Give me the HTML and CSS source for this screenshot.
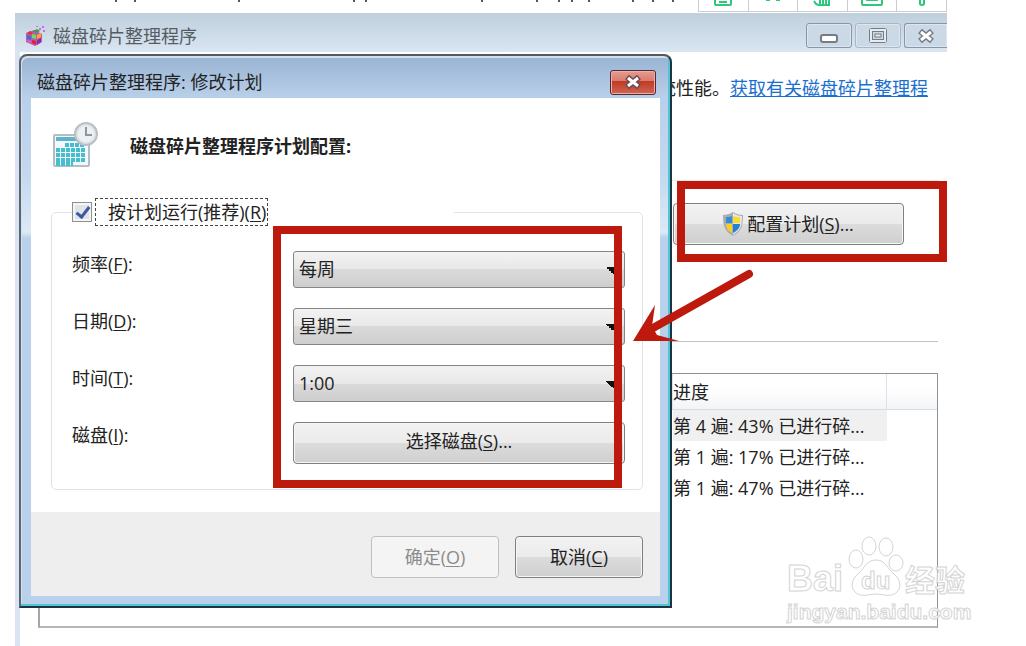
FILE: index.html
```
<!DOCTYPE html>
<html lang="zh-CN">
<head>
    <meta charset="UTF-8">
    <meta name="viewport" content="width=device-width, initial-scale=1.0">
    <title>磁盘碎片整理程序</title>
    <link rel="stylesheet" href="styles.css">
</head>
<body>
    <div class="page">
        <div class="top-strip">
            <svg class="text-tails" width="600" height="3" viewBox="98 0 600 3" aria-hidden="true">
                <path d="M116 0v2M135 0v2M239 0v2M354 0v2M366 0v2M482 0v2M537 0v2M559 0v2M572 0v2M589 0v2M633 0v2M653 0v2M673 0v2" stroke="#555" stroke-width="2"/>
            </svg>
            <div class="tools">
                <button type="button" aria-label="文档"><svg width="20" height="7"><path d="M2 0v4q0 1 1 1h14q1 0 1-1V0M6 2h8"/></svg></button>
                <button type="button" aria-label="剪切"><svg width="20" height="7"><path d="M3 0h4M13 0h4"/></svg></button>
                <button type="button" aria-label="图表"><svg width="20" height="7"><path d="M2 1q2 4 5 4h10V0M8 0v5M11 0v5M14 0v5"/></svg></button>
                <button type="button" aria-label="图片"><svg width="22" height="7"><path d="M1 0v4q0 1 1 1h18q1 0 1-1V0M5 0h12"/></svg></button>
                <button type="button" aria-label="更多"><svg width="20" height="7"><path d="M8 0v4q2 2 4 0V0"/></svg></button>
            </div>
        </div>

        <main class="window">
            <header class="window-bar">
                <svg width="22" height="22" viewBox="0 0 22 22" aria-hidden="true">
                    <path d="M2 8l8-3 8 4v8l-7 4-9-4z" fill="#b85bb5"/>
                    <path d="M3 8l3-2 3 2-3 2z" fill="#e8342c"/>
                    <path d="M9 6l4-2 3 2-3 2z" fill="#3f9a4c"/>
                    <path d="M3 10l4 1v4l-4-1z" fill="#3b6fd8"/>
                    <path d="M8 9l4 1v4l-4-1z" fill="#6fdc4f"/>
                    <path d="M8 15l4 1v4l-4-2z" fill="#d92143"/>
                    <path d="M13 10l4-2v4l-4 2z" fill="#f7a823"/>
                    <path d="M13 15l4-2v4l-4 3z" fill="#8b2f9d"/>
                    <path d="M3 15l4 1v2l-4-2z" fill="#f0609a"/>
                    <path d="M15 3h2v2h-2zM18 1h2v2h-2zM19 5h2v2h-2zM12 1h2v1h-2z" fill="#c56be8"/>
                </svg>
                <h1>磁盘碎片整理程序</h1>
                <div class="window-buttons">
                    <button type="button" aria-label="最小化">
                        <svg width="20" height="16"><rect x="2" y="7" width="16" height="7" rx="2" fill="#fff" stroke="#777b82" stroke-width="2"/></svg>
                    </button>
                    <button type="button" aria-label="最大化" class="faded">
                        <svg width="20" height="16"><rect x="3" y="2" width="14" height="11" rx="1" fill="none" stroke="#777b82" stroke-width="4"/><rect x="3" y="2" width="14" height="11" fill="none" stroke="#e5ebf2" stroke-width="2"/><rect x="7" y="6" width="6" height="3" fill="#e5ebf2" stroke="#777b82"/></svg>
                    </button>
                    <button type="button" aria-label="关闭" class="cut">
                        <svg width="20" height="16"><path d="M4 3l12 10M16 3L4 13" stroke="#777b82" stroke-width="6"/><path d="M5 4l10 8M15 4L5 12" stroke="#fff" stroke-width="3"/></svg>
                    </button>
                </div>
            </header>

            <div class="window-body">
                <p class="intro">统性能。<a href="#">获取有关磁盘碎片整理程</a></p>
                <section class="schedule">
                    <div class="schedule-action">
                        <button type="button" class="btn">
                            <svg width="20" height="24" viewBox="0 0 20 24" aria-hidden="true">
                                <path d="M10 0c3 2 6 3 10 3 0 10-1 16-10 21C1 19 0 13 0 3c4 0 7-1 10-3z" fill="#a9adb3"/>
                                <path d="M10 1c3 2 6 3 9 3 0 9-1 14-9 19z" fill="#e4e6e8"/>
                                <path d="M9 4v7H3V5c2 0 4 0 6-1z" fill="#2f8fd8"/>
                                <path d="M10 4c2 1 5 1 7 1v6h-7z" fill="#f8dc2c"/>
                                <path d="M9 12v9c-4-2-6-5-6-9z" fill="#f8cf22"/>
                                <path d="M10 12h7c0 4-3 7-7 9z" fill="#2480d2"/>
                            </svg>
                            <span>配置计划(<u>S</u>)...</span>
                        </button>
                    </div>
                </section>
                <table class="disks">
                    <thead>
                        <tr><th class="name"></th><th>进度</th><th class="rest"></th></tr>
                    </thead>
                    <tbody>
                        <tr class="selected"><td></td><td>第 4 遍: 43% 已进行碎...</td><td></td></tr>
                        <tr><td></td><td>第 1 遍: 17% 已进行碎...</td><td></td></tr>
                        <tr><td></td><td>第 1 遍: 47% 已进行碎...</td><td></td></tr>
                        <tr class="filler"><td></td><td></td><td></td></tr>
                    </tbody>
                </table>
            </div>
        </main>

        <form class="dialog" role="dialog" aria-labelledby="dialog-title">
            <header class="dialog-bar">
                <h2 id="dialog-title">磁盘碎片整理程序: 修改计划</h2>
                <button type="button" class="close" aria-label="关闭">
                    <svg width="20" height="16"><path d="M4 3l12 10M16 3L4 13" stroke="#6d4a50" stroke-width="6"/><path d="M5 4l10 8M15 4L5 12" stroke="#fff" stroke-width="3"/></svg>
                </button>
            </header>
            <div class="dialog-content">
                <div class="heading">
                    <svg width="46" height="48" viewBox="0 0 46 48" aria-hidden="true">
                        <rect x="1" y="13" width="35" height="31" rx="1" fill="#f4f8fa" stroke="#b4bdc3" stroke-width="2"/>
                        <rect x="3" y="15" width="31" height="4" fill="#5cb5c8"/>
                        <path d="M12 23h20M3 28h29M3 33h29M3 38h29M3 42h17" stroke="#45bfd0" stroke-width="4" stroke-dasharray="4 1"/>
                        <circle cx="33" cy="12" r="11" fill="#dfe4e7" stroke="#b9bfc4" stroke-width="2"/>
                        <circle cx="33" cy="12" r="8" fill="#edf1f3"/>
                        <path d="M33 5v8h6" fill="none" stroke="#8b979f" stroke-width="2"/>
                    </svg>
                    <h3>磁盘碎片整理程序计划配置:</h3>
                </div>
                <fieldset>
                    <legend>
                        <input type="checkbox" id="run" checked>
                        <label for="run">按计划运行(推荐)(<u>R</u>)</label>
                    </legend>
                    <div class="fields">
                        <label for="freq">频率(<u>F</u>):</label>
                        <select id="freq"><option>每周</option></select>
                        <label for="day">日期(<u>D</u>):</label>
                        <select id="day"><option>星期三</option></select>
                        <label for="time">时间(<u>T</u>):</label>
                        <select id="time"><option>1:00</option></select>
                        <label for="disk">磁盘(<u>I</u>):</label>
                        <button type="button" id="disk" class="btn"><span>选择磁盘(<u>S</u>)...</span></button>
                        <div class="mark mark-fields"></div>
                    </div>
                </fieldset>
            </div>
            <footer class="dialog-footer">
                <button type="submit" class="btn" disabled><span>确定(<u>O</u>)</span></button>
                <button type="button" class="btn"><span>取消(<u>C</u>)</span></button>
            </footer>
        </form>

        <div class="mark mark-schedule"></div>
        <svg class="arrow" width="124" height="76" viewBox="0 0 124 76" aria-hidden="true">
            <path d="M116 6L20 60" stroke="#bd190d" stroke-width="8" stroke-linecap="round"/>
            <path d="M0 73L22 37 19 58 24 67 46 73z" fill="#bd190d"/>
        </svg>

        <svg class="watermark" width="190" height="90" viewBox="0 0 190 90" role="img" aria-label="Baidu 经验">
            <g fill="#fff" stroke="#d0d0d0">
                <text x="2" y="55" class="wm-logo">Bai</text>
                <ellipse cx="71" cy="23" rx="7" ry="9"/>
                <ellipse cx="84" cy="10" rx="7" ry="9"/>
                <ellipse cx="101" cy="11" rx="7" ry="9"/>
                <ellipse cx="111" cy="27" rx="7" ry="8"/>
                <path d="M91 24c-10 0-12 9-18 14-6 5-8 13-3 18 6 6 14 2 21 2s15 4 21-2c5-5 3-13-3-18-7-5-8-14-18-14z"/>
                <text x="76" y="53" class="wm-du">du</text>
                <text x="120" y="55" class="wm-cn">经验</text>
                <text x="2" y="83" class="wm-url">jingyan.baidu.com</text>
            </g>
        </svg>
    </div>
</body>
</html>
```
FILE: styles.css
```
body {
    margin: 0;
    background: #fff;
    color: #222;
    font-family: "Open Sans", "Noto Sans CJK SC", sans-serif;
    font-size: 18px;
    line-height: 26px;
}

button,
select {
    font: inherit;
    color: inherit;
}

h1,
h2,
h3,
p {
    margin: 0;
    font-size: 18px;
    font-weight: normal;
}

u {
    text-underline-offset: 2px;
}

.page {
    position: relative;
    display: flex;
    flex-direction: column;
    box-sizing: border-box;
    min-height: 100vh;
    padding: 0 79px 0 15px;
    overflow: hidden;
}

/* strip above the window */
.top-strip {
    display: flex;
    justify-content: flex-end;
    height: 13px;
}

.text-tails {
    flex: none;
}

.tools {
    display: flex;
    width: 248px;
    height: 11px;
    border-left: 1px solid #ccc;
    border-bottom: 1px solid #ccc;
}

.tools button {
    display: flex;
    flex: 1;
    justify-content: center;
    padding: 0;
    border: 0;
    border-right: 1px solid #ccc;
    background: #fff;
}

.tools path {
    fill: none;
    stroke: #2fc77d;
    stroke-width: 2;
}

/* main window */
.window {
    display: flex;
    flex: 1;
    flex-direction: column;
}

.window-bar {
    display: flex;
    align-items: center;
    height: 39px;
    padding-left: 9px;
    background: linear-gradient(#bfcfdc, #dae5f2);
}

.window-bar h1 {
    flex: 1;
    margin-left: 7px;
    padding-top: 6px;
    color: #555c64;
}

.window-bar > svg {
    margin-top: 6px;
}

.window-buttons {
    display: flex;
    gap: 3px;
    margin-top: 6px;
}

.window-buttons button {
    display: flex;
    align-items: center;
    justify-content: center;
    width: 46px;
    height: 25px;
    padding: 0;
    border: 1px solid #8795a8;
    border-radius: 3px;
    background: #cbd8e5;
    box-shadow: inset 0 0 0 1px #dde6ef;
}

.window-buttons .faded {
    border-color: #a9b6c6;
}

.window-buttons .cut {
    width: 43px;
    border-right: 0;
    border-radius: 3px 0 0 3px;
}

.window-body {
    flex: 1;
    padding: 23px 9px 18px 18px;
    border-left: 5px solid #d8e4f1;
}

.intro {
    padding-right: 10px;
    text-align: right;
}

.intro a {
    color: #1a6fcf;
}

.schedule {
    margin-top: 79px;
    border-top: 1px solid #e8e8e8;
    border-bottom: 1px solid #c4c4c4;
}

.schedule-action {
    display: flex;
    justify-content: flex-end;
    padding: 22px 34px 96px 0;
}

.schedule-action .btn {
    width: 231px;
}

.btn {
    display: flex;
    align-items: center;
    justify-content: center;
    gap: 4px;
    height: 42px;
    padding: 0;
    border: 1px solid #7f7f7f;
    border-radius: 4px;
    background: linear-gradient(#f2f2f2, #ebebeb 50%, #dcdcdc 50%, #cfcfcf);
    box-shadow: inset 0 0 0 1px #f6f6f6;
}

.btn:disabled {
    border-color: #bfbfbf;
    background: #f4f4f4;
    color: #8c8c8c;
}

.disks {
    width: 100%;
    height: 255px;
    margin-top: 31px;
    border: 1px solid #8f9296;
    border-bottom: 2px solid #b4b6b9;
    border-left: 2px solid #a4a6a9;
    border-spacing: 0;
    table-layout: fixed;
}

.disks th,
.disks td {
    height: 31px;
    padding: 0;
    font-weight: normal;
    text-align: left;
    white-space: nowrap;
}

.disks th {
    height: 35px;
    border-right: 1px solid #dfe2e6;
    border-bottom: 1px solid #d9dce0;
    background: linear-gradient(#fff 40%, #f2f4f7);
}

.disks .rest {
    width: 50px;
    border-right: 0;
}

.disks .name {
    width: 632px;
}

.disks .selected td:nth-child(2) {
    background: #f0f0f0;
}

.disks .filler td {
    height: auto;
}

/* schedule dialog */
.dialog {
    position: absolute;
    top: 54px;
    left: 19px;
    right: 354px;
    box-sizing: border-box;
    padding: 0 10px 10px;
    border: 2px solid #1f343c;
    border-left-color: #5d6670;
    border-top-color: #55595e;
    border-radius: 8px 8px 0 0;
    background: linear-gradient(#98b3d2, #b9d0ea 42px, #c4d9ef 120px, #dce9f6 176px, #b9d1ea 182px);
    box-shadow: inset -2px -2px 0 #4fc4dc, inset 1px 2px 0 #d5dfe9;
}

.dialog-bar {
    display: flex;
    align-items: center;
    justify-content: space-between;
    height: 42px;
    padding: 0 4px 0 6px;
}

.dialog-bar h2 {
    padding-top: 10px;
}

.close {
    display: flex;
    align-items: center;
    justify-content: center;
    width: 46px;
    height: 25px;
    margin-top: 10px;
    padding: 0;
    border: 1px solid #54282f;
    border-radius: 3px;
    background: linear-gradient(#e59c91, #d97a6c 45%, #bf3b25 45%, #cf6655);
    box-shadow: inset 0 0 0 1px #eeb0a6;
}

.dialog-content {
    padding: 24px 17px 22px 20px;
    background: #fff;
}

.heading {
    display: flex;
    align-items: center;
    gap: 31px;
    padding-left: 2px;
}

.heading h3 {
    font-weight: bold;
}

fieldset {
    margin: 28px 0 0;
    padding: 0 17px 25px 20px;
    border: 1px solid #dde3e8;
    border-radius: 5px;
}

legend {
    display: flex;
    align-items: center;
    gap: 3px;
    box-sizing: border-box;
    width: 382px;
    padding: 0;
}

legend input {
    appearance: none;
    width: 20px;
    height: 20px;
    margin: 0;
    border: 1px solid #8e8f8f;
    background: #dfe3ea;
    box-shadow: inset 0 0 0 2px #f5f5f5;
}

legend input:checked::after {
    content: "";
    display: block;
    width: 5px;
    height: 11px;
    margin: 1px 0 0 6px;
    border: solid #3f57a0;
    border-width: 0 3px 3px 0;
    transform: rotate(38deg);
}

legend label {
    padding: 0 1px 0 12px;
    border: 1px dashed #444;
}

.fields {
    position: relative;
    display: grid;
    grid-template-columns: 221px 1fr;
    align-items: start;
    gap: 20px 0;
    padding-top: 25px;
}

select {
    appearance: none;
    height: 37px;
    padding: 0 5px 2px;
    border: 1px solid #858585;
    border-radius: 3px;
    background:
        linear-gradient(45deg, transparent 50%, #111 50%) right 11px top 15px / 7px 7px no-repeat,
        linear-gradient(-45deg, transparent 50%, #111 50%) right 4px top 15px / 7px 7px no-repeat,
        linear-gradient(#f2f2f2, #e8e8e8 50%, #dadada 50%, #cecece);
}

.fields .btn {
    padding-bottom: 4px;
}

.dialog-footer {
    display: flex;
    justify-content: flex-end;
    gap: 16px;
    padding: 24px 17px 18px;
    background: #eee;
}

.dialog-footer .btn {
    width: 128px;
}

/* red annotations */
.mark {
    position: absolute;
    border: 8px solid #bd190d;
    pointer-events: none;
}

.mark-fields {
    inset: 0 3px -24px 201px;
}

.mark-schedule {
    top: 181px;
    right: 79px;
    width: 254px;
    height: 65px;
}

.arrow {
    position: absolute;
    top: 268px;
    right: 269px;
    fill: none;
}

.watermark {
    position: absolute;
    top: 536px;
    right: 51px;
    opacity: 0.9;
}

.wm-logo,
.wm-du {
    font: bold 36px "Liberation Sans", sans-serif;
}

.wm-du {
    font-size: 24px;
}

.wm-cn {
    font: bold 30px "Noto Sans CJK SC", sans-serif;
}

.wm-url {
    font: bold 21px "Liberation Sans", sans-serif;
}
```
